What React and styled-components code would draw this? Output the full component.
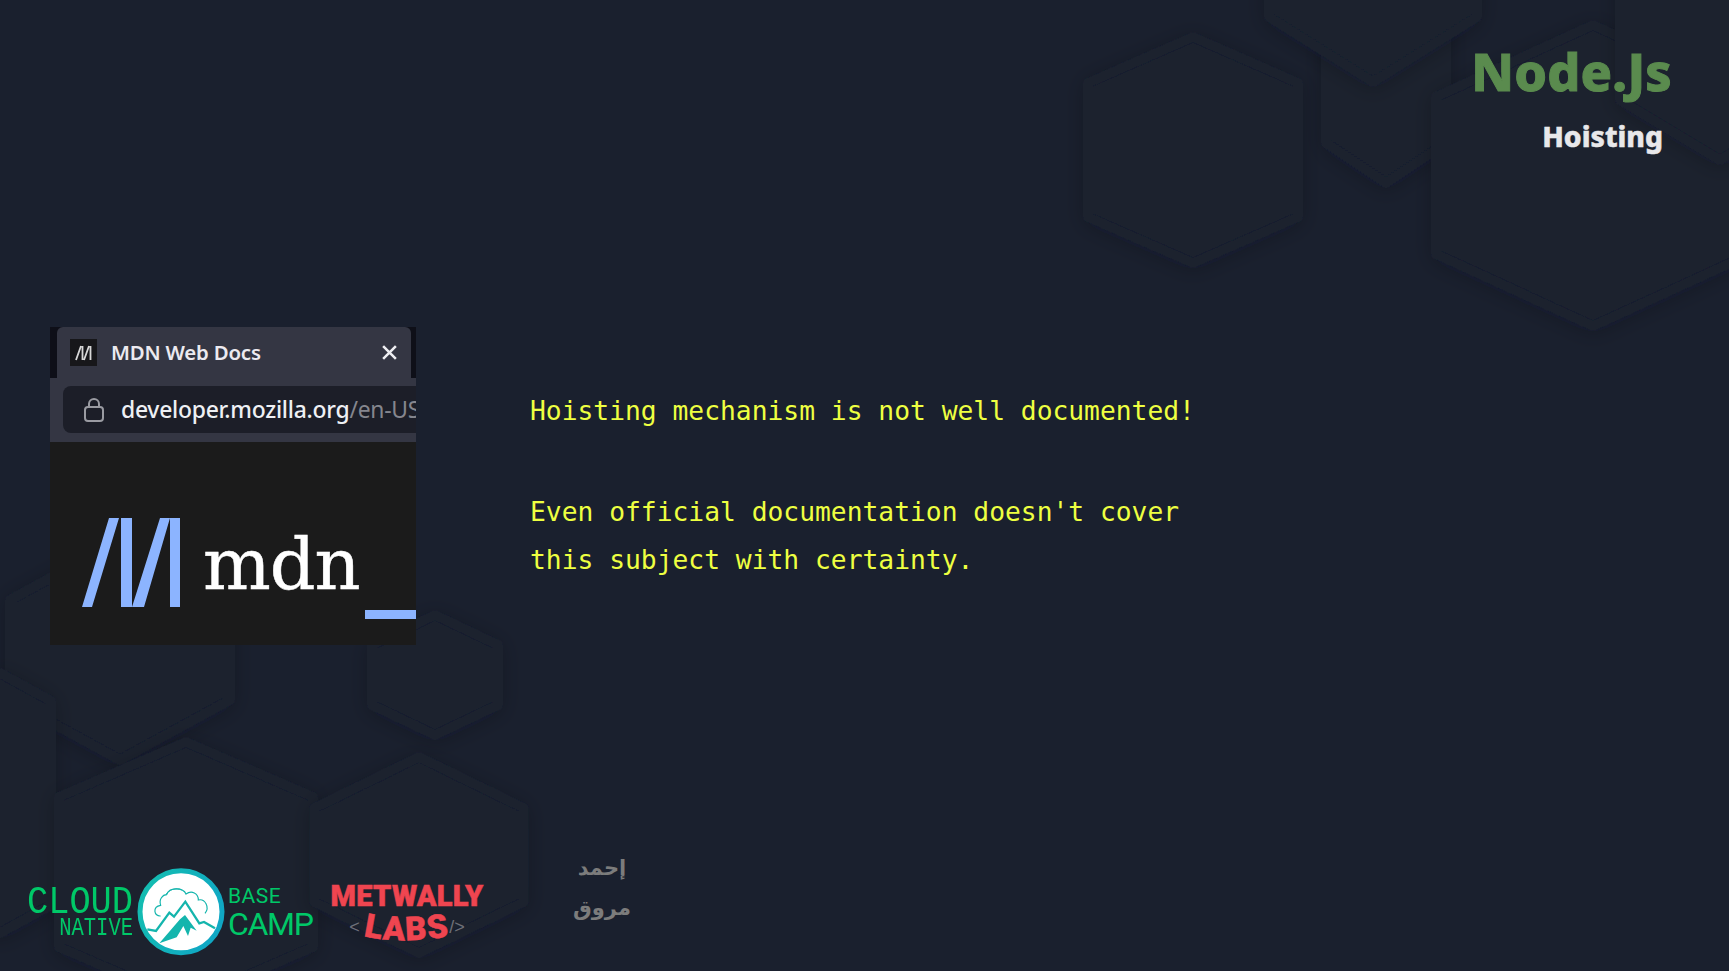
import React from "react";
import styled, { createGlobalStyle } from "styled-components";

const Global = createGlobalStyle`
  html, body { margin: 0; padding: 0; background: #1a202e; }
  * { box-sizing: border-box; }
`;

const Page = styled.div`
  position: relative;
  width: 1729px;
  height: 971px;
  overflow: hidden;
  background: #1a202e;
  display: grid;
  grid-template-rows: 327px 531px 113px;
`;

const Backdrop = styled.svg`
  position: absolute;
  inset: 0;
  width: 1729px;
  height: 971px;
`;

const Header = styled.header`
  position: relative;
  display: flex;
  flex-direction: column;
  align-items: flex-end;
  padding: 36px 57px 0 0;
  font-family: "Noto Sans", sans-serif;
  font-weight: 800;
`;

const Title = styled.h1`
  margin: 0;
  font-size: 52px;
  line-height: 70px;
  font-weight: 800;
  color: #5a8b4e;
  letter-spacing: 0.2px;
  -webkit-text-stroke: 1px #5a8b4e;
`;

const Subtitle = styled.h2`
  margin: 10px 9px 0 0;
  font-size: 28.3px;
  line-height: 40px;
  font-weight: 800;
  color: #e8e8ea;
  -webkit-text-stroke: 0.5px #e8e8ea;
`;

const Main = styled.main`
  position: relative;
  display: flex;
  align-items: flex-start;
  gap: 114px;
  padding-left: 50px;
`;

const Card = styled.div`
  width: 366px;
  height: 318px;
  display: flex;
  flex-direction: column;
  overflow: hidden;
  background: #1b1b1b;
  font-family: "Noto Sans", sans-serif;
`;

const TabStrip = styled.div`
  height: 51px;
  padding: 0 5px 0 7px;
  background: #0e0f18;
  display: flex;
`;

const Tab = styled.div`
  flex: 1;
  display: flex;
  align-items: center;
  padding: 0 10px 0 13px;
  background: #343643;
  border-radius: 6px 6px 0 0;
`;

const Favicon = styled.svg`
  width: 27px;
  height: 27px;
  flex: none;
`;

const TabLabel = styled.span`
  flex: 1;
  margin: -2px 0 0 14px;
  font-size: 20.4px;
  font-weight: 600;
  letter-spacing: -0.2px;
  color: #eceaf0;
`;

const Close = styled.svg`
  width: 17px;
  height: 17px;
  margin-right: 3px;
  flex: none;
`;

const Toolbar = styled.div`
  height: 64px;
  padding: 8px 0 9px 13px;
  background: #343643;
`;

const UrlBar = styled.div`
  height: 47px;
  display: flex;
  align-items: center;
  padding-left: 20px;
  background: #1c1e28;
  border-radius: 8px 0 0 8px;
  overflow: hidden;
  white-space: nowrap;
  font-size: 22.9px;
  font-weight: 500;
  letter-spacing: -0.25px;
`;

const Lock = styled.svg`
  width: 22px;
  height: 26px;
  flex: none;
  margin-right: 16px;
`;

const Host = styled.span`
  color: #eef0f4;
`;

const UrlPath = styled.span`
  color: #85868e;
  font-weight: 400;
`;

const Banner = styled.div`
  position: relative;
  flex: 1;
  display: flex;
  align-items: flex-start;
  padding: 76px 0 0 32px;
`;

const MdnMark = styled.svg`
  width: 98px;
  height: 89px;
  flex: none;
`;

const MdnWord = styled.span`
  margin: -3px 0 0 23px;
  font-family: "DejaVu Serif", serif;
  font-size: 71.5px;
  line-height: 100px;
  letter-spacing: -1px;
  color: #fff;
  -webkit-text-stroke: 0.5px #fff;
`;

const Cursor = styled.span`
  position: absolute;
  right: 0;
  top: 168px;
  width: 51px;
  height: 9px;
  background: #8cb4ff;
`;

const Copy = styled.div`
  padding-top: 59.5px;
  font-family: "DejaVu Sans Mono", monospace;
  font-size: 26.3px;
  line-height: 48px;
  color: #eeff41;
`;

const Para = styled.p`
  margin: 0 0 53.5px;
`;

const Footer = styled.footer`
  position: relative;
  display: flex;
  align-items: flex-start;
  padding-left: 27px;
`;

const CloudBrand = styled.div`
  display: flex;
  align-items: flex-start;
  margin-top: 9px;
  color: #00c868;
`;

const LeftWords = styled.div`
  width: 106px;
  padding-top: 21px;
  display: flex;
  flex-direction: column;
  align-items: flex-end;
  font-family: "Liberation Mono", monospace;
`;

const Cloud = styled.span`
  display: inline-block;
  font-size: 38px;
  line-height: 29px;
  transform-origin: right center;
  transform: scaleX(0.93);
`;

const Native = styled.span`
  display: inline-block;
  font-size: 25px;
  line-height: 23px;
  transform-origin: right center;
  transform: scaleX(0.82);
`;

const Badge = styled.svg`
  width: 100px;
  height: 100px;
  margin: -7px -3px 0;
  flex: none;
`;

const RightWords = styled.div`
  width: 88px;
  padding: 18px 0 0 1px;
  display: flex;
  flex-direction: column;
  font-family: "Roboto", sans-serif;
  font-weight: 400;
`;

const Base = styled.span`
  font-size: 21px;
  line-height: 22px;
  letter-spacing: 0.5px;
`;

const Camp = styled.span`
  font-size: 32px;
  line-height: 34px;
  letter-spacing: -1.3px;
`;

const LabsBrand = styled.div`
  margin: 23px 0 0 16px;
  width: 152px;
  display: flex;
  flex-direction: column;
  align-items: center;
  font-family: "Roboto", sans-serif;
  font-weight: 900;
  color: #ef4550;
`;

const LabsTop = styled.div`
  font-size: 29px;
  line-height: 30px;
  letter-spacing: 0.3px;
  white-space: nowrap;
  -webkit-text-stroke: 0.5px #ef4550;
`;

const LabsRow = styled.div`
  display: flex;
  align-items: center;
  height: 32px;
`;

const Bracket = styled.span`
  font-family: "Liberation Sans", sans-serif;
  font-weight: 400;
  font-size: 18px;
  color: #6f7078;
  padding: ${(p) => (p.$left ? "0 5px 0 0" : "0 0 0 2px")};
`;

const LabsLetter = styled.span`
  display: inline-block;
  font-size: 33px;
  line-height: 32px;
  -webkit-text-stroke: 0.5px #ef4550;
  transform: rotate(${(p) => p.$turn}deg) translateY(${(p) => p.$drop}px);
`;

const Signature = styled.div`
  margin: -10px 0 0 90px;
  display: flex;
  flex-direction: column;
  align-items: center;
  font-family: "DejaVu Sans", sans-serif;
  font-weight: 700;
  font-size: 21px;
  line-height: 40px;
  color: #7c7c7c;
  direction: rtl;
`;

const hexPoints = (cx, top, w, shoulder, h) => {
  const l = cx - w / 2;
  const r = cx + w / 2;
  return `${cx},${top} ${r},${top + shoulder} ${r},${top + h - shoulder} ${cx},${top + h} ${l},${top + h - shoulder} ${l},${top + shoulder}`;
};

const hexes = [
  [1193, 37, 210, 46, 226],
  [1386, -20, 120, 40, 203],
  [1373, -110, 208, 65, 192],
  [1593, 25, 314, 72, 301],
  [1720, -80, 200, 60, 240],
  [120, 540, 220, 60, 220],
  [435, 615, 126, 30, 120],
  [0, 673, 102, 28, 260],
  [186, 742, 254, 55, 260],
  [419, 757, 209, 51, 196],
];

const LABS = [
  ["L", 10, 0],
  ["A", 3, 2],
  ["B", -3, 2],
  ["S", -9, 0],
];

export default function App() {
  return (
    <Page>
      <Global />
      <Backdrop viewBox="0 0 1729 971" aria-hidden="true">
        <defs>
          <filter id="halo" x="-30%" y="-30%" width="160%" height="160%">
            <feDropShadow dx="0" dy="3" stdDeviation="10" floodColor="#10141f" floodOpacity="0.22" />
          </filter>
        </defs>
        {hexes.map(([cx, top, w, s, h], i) => (
          <polygon
            key={i}
            points={hexPoints(cx, top, w, s, h)}
            fill="#1a202f"
            stroke="#1a202f"
            strokeWidth="10"
            strokeLinejoin="round"
            filter="url(#halo)"
          />
        ))}
      </Backdrop>

      <Header>
        <Title>Node.Js</Title>
        <Subtitle>Hoisting</Subtitle>
      </Header>

      <Main>
        <Card>
          <TabStrip>
            <Tab>
              <Favicon viewBox="0 0 27 27">
                <rect width="27" height="27" fill="#17171a" />
                <path d="M6 21 L11 7 M12.5 7 V21 M14 21 L19 7 M20.5 7 V21" stroke="#d8d8d8" strokeWidth="1.8" fill="none" />
              </Favicon>
              <TabLabel>MDN Web Docs</TabLabel>
              <Close viewBox="0 0 16 16">
                <path d="M2 2 L14 14 M14 2 L2 14" stroke="#eeeef2" strokeWidth="2.4" />
              </Close>
            </Tab>
          </TabStrip>
          <Toolbar>
            <UrlBar>
              <Lock viewBox="0 0 22 26">
                <rect x="2" y="10" width="18" height="14" rx="3" fill="none" stroke="#9a9ba2" strokeWidth="2" />
                <path d="M6 10 V7 a5 5 0 0 1 10 0 V10" fill="none" stroke="#9a9ba2" strokeWidth="2" />
              </Lock>
              <Host>developer.mozilla.org</Host>
              <UrlPath>/en-US/docs</UrlPath>
            </UrlBar>
          </Toolbar>
          <Banner>
            <MdnMark viewBox="0 0 98 89">
              <path
                d="M27 0 H37 L10 89 H0 Z M39 0 H50 V89 H39 Z M78 0 H88 L62 89 H50 Z M88 0 H98 V89 H88 Z"
                fill="#8cb4ff"
              />
            </MdnMark>
            <MdnWord>mdn</MdnWord>
            <Cursor />
          </Banner>
        </Card>
        <Copy>
          <Para>Hoisting mechanism is not well documented!</Para>
          <Para>
            Even official documentation doesn't cover
            <br />
            this subject with certainty.
          </Para>
        </Copy>
      </Main>

      <Footer>
        <CloudBrand>
          <LeftWords>
            <Cloud>CLOUD</Cloud>
            <Native>NATIVE</Native>
          </LeftWords>
          <Badge viewBox="0 0 300 300">
            <defs>
              <linearGradient id="ring" x1="0" y1="0" x2="1" y2="0.4">
                <stop offset="0" stopColor="#14bfae" />
                <stop offset="1" stopColor="#10a8c4" />
              </linearGradient>
            </defs>
            <circle cx="153" cy="155" r="123" fill="#fff" stroke="url(#ring)" strokeWidth="15" />
            <path
              d="M92 168 C72 170 66 140 92 136 C86 118 98 104 110 104 C118 80 160 82 168 102 C185 90 205 100 205 120 C225 115 240 142 225 160"
              fill="none"
              stroke="#14b5ad"
              strokeWidth="3.5"
            />
            <path d="M108 104 C115 88 140 82 155 90" fill="none" stroke="#14b5ad" strokeWidth="3" />
            <path d="M52 208 L78 213 L118 158 L132 170 L166 125 L208 190 L222 186 L255 205" fill="none" stroke="#14b5ad" strokeWidth="7" />
            <path d="M88 250 L150 178 L165 165 L200 212 L182 203 L174 228 L160 198 L140 232 Z" fill="#14b5ad" />
          </Badge>
          <RightWords>
            <Base>BASE</Base>
            <Camp>CAMP</Camp>
          </RightWords>
        </CloudBrand>
        <LabsBrand>
          <LabsTop>METWALLY</LabsTop>
          <LabsRow>
            <Bracket $left>&lt;</Bracket>
            {LABS.map(([ch, turn, drop]) => (
              <LabsLetter key={ch} $turn={turn} $drop={drop}>
                {ch}
              </LabsLetter>
            ))}
            <Bracket>/&gt;</Bracket>
          </LabsRow>
        </LabsBrand>
        <Signature>
          <span>إحمد</span>
          <span>مروق</span>
        </Signature>
      </Footer>
    </Page>
  );
}
